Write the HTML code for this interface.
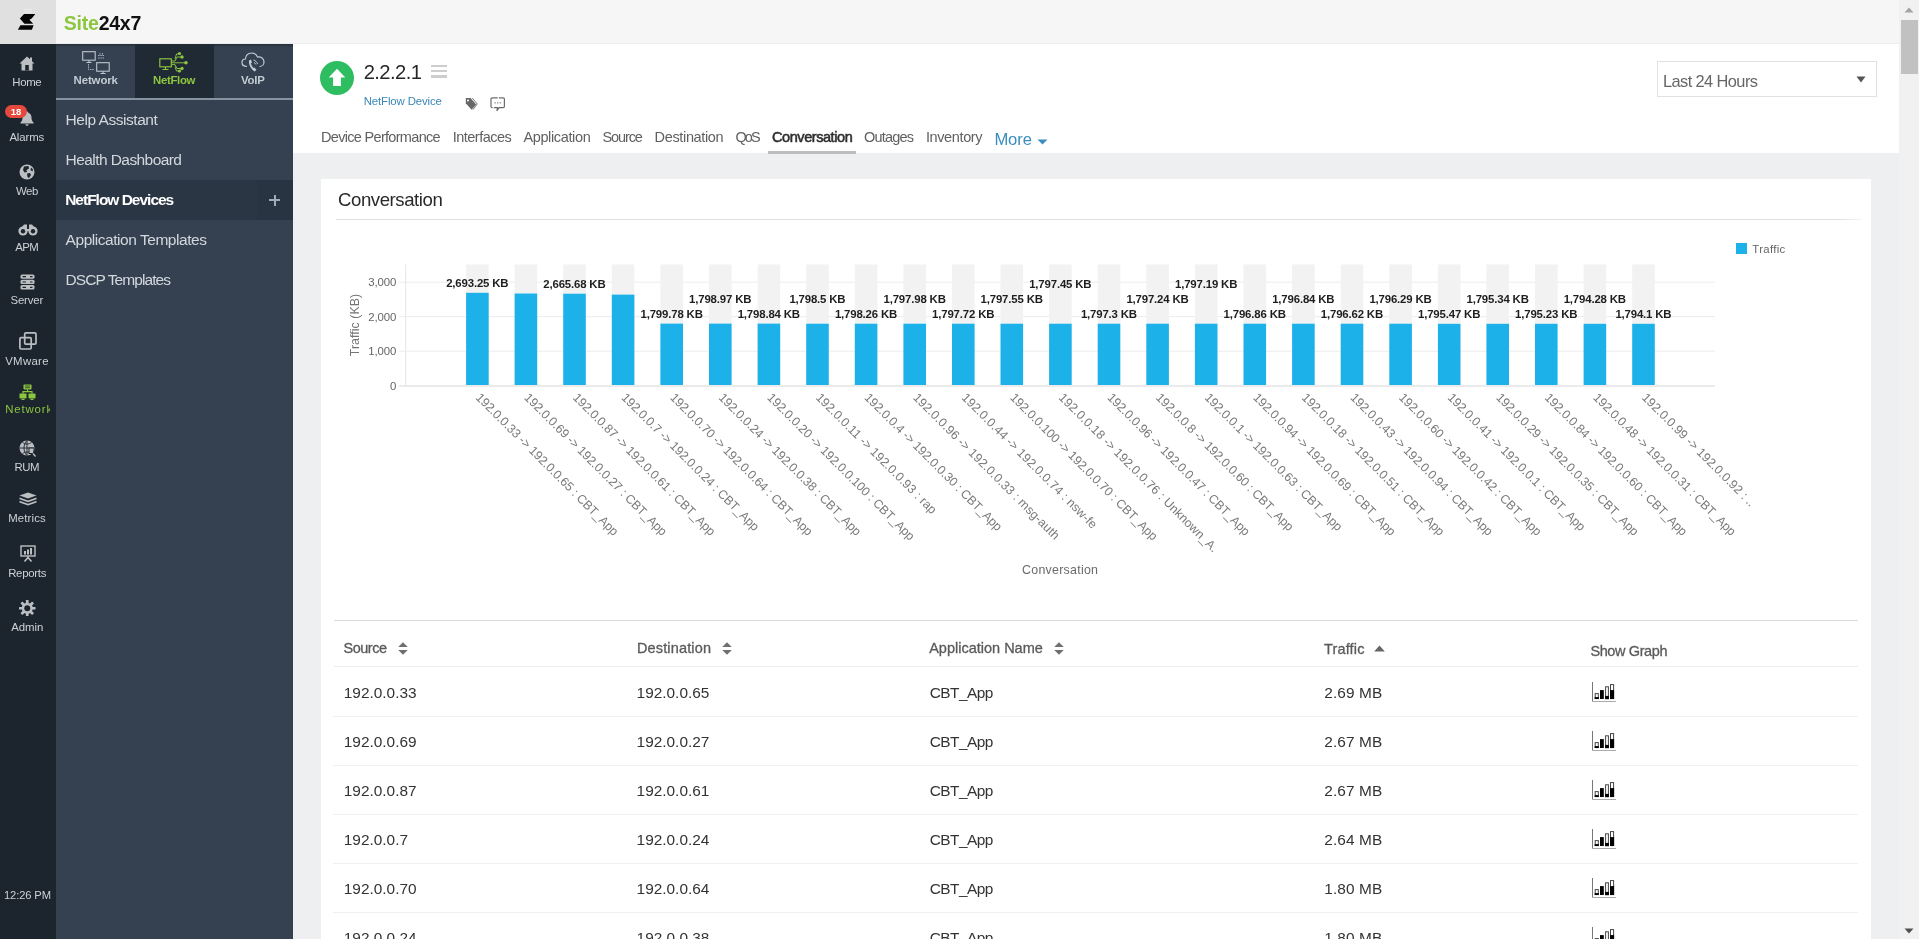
<!DOCTYPE html>
<html lang="en">
<head>
<meta charset="utf-8">
<title>Site24x7 - NetFlow Conversation</title>
<style>
*{box-sizing:border-box;margin:0;padding:0}
html,body{width:1919px;height:939px;overflow:hidden}
body{position:relative;background:#edeff1;font-family:"Liberation Sans",sans-serif;color:#333}
#root{position:absolute;left:0;top:0;width:1919px;height:939px;overflow:hidden;will-change:transform;opacity:0.999}
.abs{position:absolute}
.t{position:absolute;white-space:nowrap}
#topbar{position:absolute;left:0;top:0;width:1899px;height:43.500px;background:#f7f6f6;border-bottom:1px solid #ececec}
#logobox{position:absolute;left:0;top:0;width:56px;height:43.500px;background:#e0e0e0}
#rail{position:absolute;left:0;top:44px;width:56px;height:895px;background:#1c252e}
#side{position:absolute;left:56px;top:44px;width:237px;height:895px;background:#354151}
.stab{position:absolute;top:0;height:54px;width:79px;background:#354151}
.stab.on{background:#1f2a35}
#sshade{position:absolute;left:0;top:0;width:237px;height:3px;background:linear-gradient(#232d38,rgba(35,45,56,0))}
#sline{position:absolute;left:0;top:54px;width:237px;height:2px;background:#8694a2}
#smon{position:absolute;left:0;top:136px;width:237px;height:40px;background:#2b3645}
#hdr{position:absolute;left:293px;top:43.500px;width:1606px;height:109.500px;background:#fff}
#card{position:absolute;left:321px;top:179px;width:1550px;height:780px;background:#fff}
.hl{position:absolute;height:1px;left:334px;width:1524px}
svg.chart{position:absolute;left:321px;top:225px}
#sb{position:absolute;left:1899px;top:0;width:20px;height:939px;background:#f1f1f1}
#sbt{position:absolute;left:2px;top:20px;width:17px;height:54px;background:#c1c1c1}
</style>
</head>
<body>
<div id="root">
<!-- TOP BAR -->
<div id="topbar"></div>
<div id="logobox">
<svg class="abs" style="left:0;top:0" width="56" height="43" viewBox="0 0 56 43"><path d="M24 14H35.300L31.700 18.500L29.400 19.700L33.200 23.700H24.400L19.900 18.500Z" fill="#050505"/><path d="M20.400 25.300H33.600L31.900 29.700H17.900Z" fill="#050505"/><path d="M24 9.500H32M24 11.700H32" stroke="#ececec" stroke-width="1"/></svg>
</div>
<div class="t" style="left:63.800px;top:12px;font-size:19.500px;line-height:22px;font-weight:bold;letter-spacing:-0.23px;color:#111"><span style="color:#8cc63f">Site</span>24x7</div>

<!-- LEFT RAIL -->
<div id="rail"></div>
<svg class="abs" style="left:19.0px;top:56.0px" width="16" height="15" viewBox="0 0 16 15"><path d="M8 0.500L0.500 7.500H2.500V14.500H13.500V7.500H15.500L13 5.200V1.500H11V3.300Z" fill="#bcbfc2"/><rect x="6.200" y="9" width="3.600" height="5.500" fill="#1c252e"/></svg>
<svg class="abs" style="left:19.8px;top:111.0px" width="14" height="15" viewBox="0 0 14 15"><path d="M7 0.500C7.800 0.500 8.300 1 8.300 1.700C10.500 2.300 11.500 4.200 11.500 6.500C11.500 9.500 12.500 10.800 13.500 11.500V12.500H0.500V11.500C1.500 10.800 2.500 9.500 2.500 6.500C2.500 4.200 3.500 2.300 5.700 1.700C5.700 1 6.200 0.500 7 0.500Z" fill="#bcbfc2"/><path d="M5.300 13.300H8.700C8.700 14.200 8 14.800 7 14.800C6 14.800 5.300 14.200 5.300 13.300Z" fill="#bcbfc2"/></svg>
<div class="abs" style="left:5px;top:105px;width:22px;height:13px;border-radius:6.500px;background:#e5493d;color:#fff;font-size:9.500px;font-weight:bold;line-height:13px;text-align:center">18</div>
<svg class="abs" style="left:19.0px;top:164.0px" width="16" height="16" viewBox="0 0 16 16"><circle cx="8" cy="8" r="7.500" fill="#bcbfc2"/><path d="M5 2.500L9.500 2L10 4.500L7.500 6L8 8L5.500 8.500L4 6Z M8 9.500L11 9L12 11L10 14L8.500 13Z M12 3.500L14 5.500L13.500 7.500L11.500 6Z" fill="#1c252e"/></svg>
<svg class="abs" style="left:17.5px;top:224.0px" width="20" height="12" viewBox="0 0 20 12"><circle cx="5" cy="7" r="4.600" fill="#bcbfc2"/><circle cx="15" cy="7" r="4.600" fill="#bcbfc2"/><path d="M4 3L6 0.500H9V5H11V0.500H14L16 3V7H4Z" fill="#bcbfc2"/><circle cx="5" cy="7.200" r="2.200" fill="#1c252e"/><circle cx="15" cy="7.200" r="2.200" fill="#1c252e"/></svg>
<svg class="abs" style="left:20.0px;top:273.5px" width="15" height="16" viewBox="0 0 15 16"><rect x="0.500" y="0.500" width="14" height="4.300" rx="1.500" fill="#bcbfc2"/><rect x="0.500" y="5.800" width="14" height="4.300" rx="1.500" fill="#bcbfc2"/><rect x="0.500" y="11.100" width="14" height="4.300" rx="1.500" fill="#bcbfc2"/><path d="M2.500 2.700H6M2.500 8H6M2.500 13.300H6" stroke="#1c252e" stroke-width="1.200"/><path d="M10 2.700H12.500M10 8H12.500M10 13.300H12.500" stroke="#1c252e" stroke-width="1.200"/></svg>
<svg class="abs" style="left:18.5px;top:332.0px" width="18" height="18" viewBox="0 0 18 18"><rect x="5.700" y="0.900" width="11.300" height="11.300" rx="1.200" fill="none" stroke="#bcbfc2" stroke-width="1.700"/><rect x="0.900" y="5.700" width="11.300" height="11.300" rx="1.200" fill="none" stroke="#bcbfc2" stroke-width="1.700"/></svg>
<svg class="abs" style="left:19.0px;top:384.0px" width="17" height="16" viewBox="0 0 17 16"><rect x="4.500" y="0.500" width="8" height="5" rx="0.800" fill="#8cc63f"/><rect x="0.500" y="9.500" width="7" height="5" rx="0.800" fill="#8cc63f"/><rect x="9.500" y="9.500" width="7" height="5" rx="0.800" fill="#8cc63f"/><path d="M8.500 5.500V7.700M4 9.500V7.700H13V9.500M2.500 15.500H5.500M11.500 15.500H14.500" stroke="#8cc63f" stroke-width="1.200" fill="none"/><path d="M6 2H11M6 3.700H11" stroke="#1c252e" stroke-width="0.700"/></svg>
<svg class="abs" style="left:18.5px;top:440.0px" width="17" height="17" viewBox="0 0 17 17"><circle cx="8" cy="8" r="7.500" fill="#bcbfc2"/><path d="M8 0.500V15.500M0.500 8H15.500M3.500 2.500C6 4.500 10 4.500 12.500 2.500M3.500 13.500C6 11.500 10 11.500 12.500 13.500M8 0.500C4 4.500 4 11.500 8 15.500" stroke="#1c252e" stroke-width="0.900" fill="none"/><rect x="9.500" y="7.500" width="5" height="6.500" fill="#1c252e"/><rect x="10.500" y="8.500" width="3.500" height="4.500" fill="#bcbfc2"/><path d="M14 13.500L16.500 16.500" stroke="#bcbfc2" stroke-width="1.300"/></svg>
<svg class="abs" style="left:18.5px;top:491.5px" width="18" height="15" viewBox="0 0 18 15"><path d="M9 0.500L17.500 3.500L9 6.500L0.500 3.500Z" fill="#bcbfc2"/><path d="M0.500 5.500L9 8.500L17.500 5.500V7.200L9 10.200L0.500 7.200Z M0.500 8.800L9 11.800L17.500 8.800V10.500L9 13.500L0.500 10.500Z" fill="#bcbfc2"/></svg>
<svg class="abs" style="left:19.5px;top:545.0px" width="16" height="17" viewBox="0 0 16 17"><rect x="1" y="1" width="14" height="10" fill="none" stroke="#bcbfc2" stroke-width="1.400"/><rect x="4" y="6" width="2" height="3.500" fill="#bcbfc2"/><rect x="7" y="4.500" width="2" height="5" fill="#bcbfc2"/><rect x="10" y="3" width="2" height="6.500" fill="#bcbfc2"/><path d="M8 11V13M8 12.500L4.500 16.500M8 12.500L11.500 16.500" stroke="#bcbfc2" stroke-width="1.500" fill="none"/></svg>
<svg class="abs" style="left:19.2px;top:599.8px" width="16.5" height="16.5" viewBox="0 0 16.5 16.5"><rect x="6.900" y="0" width="2.700" height="16.500" rx="0.500" transform="rotate(0 8.250 8.250)" fill="#bcbfc2"/><rect x="6.900" y="0" width="2.700" height="16.500" rx="0.500" transform="rotate(45 8.250 8.250)" fill="#bcbfc2"/><rect x="6.900" y="0" width="2.700" height="16.500" rx="0.500" transform="rotate(90 8.250 8.250)" fill="#bcbfc2"/><rect x="6.900" y="0" width="2.700" height="16.500" rx="0.500" transform="rotate(135 8.250 8.250)" fill="#bcbfc2"/><circle cx="8.250" cy="8.250" r="5.600" fill="#bcbfc2"/><circle cx="8.250" cy="8.250" r="3" fill="#1c252e"/></svg>
<div class="t " style="left:12.3px;top:75px;font-size:11.4px;line-height:15px;letter-spacing:-0.34px;color:#cdd1d5;">Home</div>
<div class="t " style="left:9.4px;top:130px;font-size:11.4px;line-height:15px;letter-spacing:-0.13px;color:#cdd1d5;">Alarms</div>
<div class="t " style="left:16.0px;top:184px;font-size:11.4px;line-height:15px;letter-spacing:-0.47px;color:#cdd1d5;">Web</div>
<div class="t " style="left:15.2px;top:240px;font-size:11.4px;line-height:15px;letter-spacing:-0.60px;color:#cdd1d5;">APM</div>
<div class="t " style="left:10.5px;top:293px;font-size:11.4px;line-height:15px;letter-spacing:-0.16px;color:#cdd1d5;">Server</div>
<div class="t " style="left:5.2px;top:354px;font-size:11.4px;line-height:15px;letter-spacing:0.32px;color:#cdd1d5;">VMware</div>
<div class="t " style="left:5.2px;top:402px;font-size:11.4px;line-height:15px;letter-spacing:0.87px;color:#8cc63f;width:44.400px;overflow:hidden;">Network</div>
<div class="t " style="left:14.5px;top:460px;font-size:11.4px;line-height:15px;letter-spacing:-0.53px;color:#cdd1d5;">RUM</div>
<div class="t " style="left:8.2px;top:511px;font-size:11.4px;line-height:15px;letter-spacing:0.13px;color:#cdd1d5;">Metrics</div>
<div class="t " style="left:8.2px;top:566px;font-size:11.4px;line-height:15px;letter-spacing:-0.29px;color:#cdd1d5;">Reports</div>
<div class="t " style="left:11.2px;top:620px;font-size:11.4px;line-height:15px;letter-spacing:-0.05px;color:#cdd1d5;">Admin</div>
<div class="t " style="left:4.0px;top:888px;font-size:11.2px;line-height:15px;letter-spacing:-0.13px;color:#cdd1d5;">12:26 PM</div>

<!-- SIDEBAR -->
<div id="side">
 <div class="stab" style="left:0"></div>
 <div class="stab on" style="left:79px"></div>
 <div class="stab" style="left:158px"></div>
 <div id="sshade"></div>
 <div id="sline"></div>
 <div id="smon"></div>
 <div class="abs" style="left:201px;top:136px;width:36px;height:40px;background:#293443"></div>
</div>
<svg class="abs" style="left:81.5px;top:50.5px" width="28" height="23" viewBox="0 0 28 23"><rect x="0.700" y="0.700" width="12.500" height="8.500" fill="none" stroke="#c3cbd3" stroke-width="1.050"/><path d="M7 9.500V11M4.500 11.500H9.500" stroke="#c3cbd3" stroke-width="1.050"/><rect x="14.700" y="11.700" width="12.500" height="8.500" fill="none" stroke="#c3cbd3" stroke-width="1.050"/><path d="M21 20.500V22M18.500 22.500H23.500" stroke="#c3cbd3" stroke-width="1.050"/><path d="M16 4.500H22M16 7H22M18 2V4.500M20.500 2V4.500" stroke="#c3cbd3" stroke-width="0.800" stroke-dasharray="1.500 0.800"/><path d="M6.500 13V18.500H12" stroke="#c3cbd3" stroke-width="0.800" stroke-dasharray="1.500 0.800" fill="none"/></svg>
<svg class="abs" style="left:159.0px;top:51.0px" width="30" height="22" viewBox="0 0 30 22"><rect x="0.800" y="7.800" width="11.500" height="8" fill="none" stroke="#8cc63f" stroke-width="1.150"/><path d="M6.500 16V18M3.500 18.500H9.500" stroke="#8cc63f" stroke-width="1.150"/><path d="M12.500 11.800H26M12.500 10H16L18 6H22M12.500 13.600H16L18 17.500H22M16 8L17.500 3H20M16 15.600L17.500 20H20" stroke="#8cc63f" stroke-width="0.950" fill="none"/><circle cx="27" cy="11.800" r="1.800" fill="#8cc63f"/><circle cx="23" cy="6" r="1.700" fill="#8cc63f"/><circle cx="23" cy="17.500" r="1.700" fill="#8cc63f"/><circle cx="20.500" cy="2.500" r="1.600" fill="#8cc63f"/><circle cx="20.500" cy="20" r="1.600" fill="#8cc63f"/></svg>
<svg class="abs" style="left:241.0px;top:51.5px" width="24" height="21" viewBox="0 0 24 21"><path d="M6 14.500C2.500 14.500 1 12.500 1 10.500C1 8.500 2.500 7 4.500 7C4.500 3.500 7 1 10.500 1C13.500 1 15.500 2.500 16.500 5C20 4.500 23 6.500 23 10C23 12.500 21 14.500 18.500 14.500" fill="none" stroke="#c3cbd3" stroke-width="1.200"/><path d="M8 8.500C7.500 12.500 10 17 13.500 19.500L15.500 18L13.500 15.500L12.500 16C11 14.500 10 12.500 10 11L11 10.500L10 7.500Z" fill="#c3cbd3"/><path d="M12.500 8C14.500 8.500 16 10 16.500 12M13 10.500C14 11 14.500 11.500 15 12.500" stroke="#c3cbd3" stroke-width="1" fill="none"/></svg>
<div class="abs" style="left:269px;top:199px;width:11px;height:2px;background:#a3abb4"></div><div class="abs" style="left:273.500px;top:194.500px;width:2px;height:11px;background:#a3abb4"></div>
<div class="t " style="left:73.5px;top:73px;font-size:11.4px;line-height:15px;letter-spacing:-0.08px;color:#c3cbd3;font-weight:bold;">Network</div>
<div class="t " style="left:153.0px;top:73px;font-size:11.4px;line-height:15px;letter-spacing:-0.32px;color:#8cc63f;font-weight:bold;">NetFlow</div>
<div class="t " style="left:241.0px;top:73px;font-size:11.4px;line-height:15px;letter-spacing:-0.23px;color:#c3cbd3;font-weight:bold;">VoIP</div>
<div class="t " style="left:65.6px;top:110px;font-size:15.5px;line-height:20px;letter-spacing:-0.46px;color:#d3d8dd;">Help Assistant</div>
<div class="t " style="left:65.6px;top:150px;font-size:15.5px;line-height:20px;letter-spacing:-0.57px;color:#d3d8dd;">Health Dashboard</div>
<div class="t " style="left:65.2px;top:190px;font-size:15.5px;line-height:20px;letter-spacing:-1.01px;color:#fff;font-weight:bold;">NetFlow Devices</div>
<div class="t " style="left:65.6px;top:230px;font-size:15.5px;line-height:20px;letter-spacing:-0.46px;color:#d3d8dd;">Application Templates</div>
<div class="t " style="left:65.6px;top:270px;font-size:15.5px;line-height:20px;letter-spacing:-0.93px;color:#d3d8dd;">DSCP Templates</div>

<!-- HEADER -->
<div id="hdr"></div>
<div class="abs" style="left:320px;top:61px;width:33.500px;height:33.500px;border-radius:17px;background:#2ebd60"></div>
<svg class="abs" style="left:327.700px;top:68.200px" width="18" height="19" viewBox="0 0 18 19"><path d="M9 0.800L17.300 9.600H12.900V18H5.100V9.600H0.700Z" fill="#fff"/></svg>
<div class="abs" style="left:430.500px;top:64.500px;width:16.500px;height:2.400px;background:#cdcdcd"></div><div class="abs" style="left:430.500px;top:69.800px;width:16.500px;height:2.400px;background:#cdcdcd"></div><div class="abs" style="left:430.500px;top:75.200px;width:16.500px;height:2.400px;background:#cdcdcd"></div>
<svg class="abs" style="left:465px;top:97.400px" width="13" height="14" viewBox="0 0 13 14"><path d="M0.800 1H5.600L11.200 7.600L6.600 12.800L0.800 6.200Z" fill="#686868"/><circle cx="3" cy="3.400" r="1" fill="#fff"/><path d="M7.300 1L12.300 7L8 12.600" stroke="#7a7a7a" stroke-width="1" fill="none"/></svg>
<svg class="abs" style="left:490.300px;top:96.700px" width="15.500" height="14.500" viewBox="0 0 15.500 14.500"><path d="M2.200 0.900H13.200Q14.400 0.900 14.400 2.100V9.500Q14.400 10.700 13.200 10.700H9.200L6.800 13.800L7.600 10.700H2.200Q1 10.700 1 9.500V2.100Q1 0.900 2.200 0.900Z" fill="none" stroke="#6c6c6c" stroke-width="1.200" stroke-dasharray="5.500 1.200 30 1.200 40"/><path d="M4.300 5.800H5.700M7 5.800H8.400M9.700 5.800H11.100" stroke="#8d8d8d" stroke-width="1.300"/></svg>
<svg class="abs" style="left:1037px;top:138.500px" width="11" height="6" viewBox="0 0 11 6"><path d="M0.500 0.500H10.500L5.500 5.500Z" fill="#3b8dc0"/></svg>
<div class="abs" style="left:768px;top:151px;width:88px;height:2.700px;background:#bdbdbd"></div>
<div class="abs" style="left:1657px;top:61px;width:220px;height:36px;border:1px solid #e1e1e1;background:#fff"></div>
<svg class="abs" style="left:1856px;top:75.500px" width="10" height="7" viewBox="0 0 10 7"><path d="M0.500 0.500H9.500L5 6.500Z" fill="#555"/></svg>
<div class="t " style="left:363.7px;top:59px;font-size:20.2px;line-height:26px;letter-spacing:-0.58px;color:#262626;">2.2.2.1</div>
<div class="t " style="left:363.7px;top:94px;font-size:11.4px;line-height:15px;letter-spacing:-0.12px;color:#3a86b6;">NetFlow Device</div>
<div class="t " style="left:321.0px;top:128px;font-size:14.5px;line-height:19px;letter-spacing:-0.69px;color:#606060;">Device Performance</div>
<div class="t " style="left:452.8px;top:128px;font-size:14.5px;line-height:19px;letter-spacing:-0.53px;color:#606060;">Interfaces</div>
<div class="t " style="left:523.4px;top:128px;font-size:14.5px;line-height:19px;letter-spacing:-0.36px;color:#606060;">Application</div>
<div class="t " style="left:602.5px;top:128px;font-size:14.5px;line-height:19px;letter-spacing:-1.11px;color:#606060;">Source</div>
<div class="t " style="left:654.6px;top:128px;font-size:14.5px;line-height:19px;letter-spacing:-0.35px;color:#606060;">Destination</div>
<div class="t " style="left:735.4px;top:128px;font-size:14.5px;line-height:19px;letter-spacing:-1.91px;color:#606060;">QoS</div>
<div class="t " style="left:772.0px;top:128px;font-size:14.5px;line-height:19px;letter-spacing:-0.43px;color:#2e2e2e;-webkit-text-stroke:0.550px #2e2e2e;">Conversation</div>
<div class="t " style="left:864.0px;top:128px;font-size:14.5px;line-height:19px;letter-spacing:-0.80px;color:#606060;">Outages</div>
<div class="t " style="left:925.9px;top:128px;font-size:14.5px;line-height:19px;letter-spacing:-0.37px;color:#606060;">Inventory</div>
<div class="t " style="left:994.4px;top:129px;font-size:16.6px;line-height:22px;letter-spacing:-0.11px;color:#3b8dc0;">More</div>
<div class="t " style="left:1663.0px;top:71px;font-size:16.4px;line-height:21px;letter-spacing:-0.59px;color:#666;">Last 24 Hours</div>

<!-- CARD -->
<div id="card"></div>
<div class="t " style="left:338.0px;top:188px;font-size:18.6px;line-height:24px;letter-spacing:-0.44px;color:#2a2a2a;">Conversation</div>
<div class="t " style="left:343.6px;top:639px;font-size:14.5px;line-height:19px;letter-spacing:-0.51px;color:#5a5a5a;-webkit-text-stroke:0.300px #5a5a5a;">Source</div>
<div class="t " style="left:636.9px;top:639px;font-size:14.5px;line-height:19px;letter-spacing:0.16px;color:#5a5a5a;-webkit-text-stroke:0.300px #5a5a5a;">Destination</div>
<div class="t " style="left:929.2px;top:639px;font-size:14.5px;line-height:19px;letter-spacing:0.00px;color:#5a5a5a;-webkit-text-stroke:0.300px #5a5a5a;">Application Name</div>
<div class="t " style="left:1324.0px;top:640px;font-size:14.5px;line-height:19px;letter-spacing:0.15px;color:#5a5a5a;-webkit-text-stroke:0.300px #5a5a5a;">Traffic</div>
<div class="t " style="left:1590.4px;top:642px;font-size:14.5px;line-height:19px;letter-spacing:-0.39px;color:#5a5a5a;-webkit-text-stroke:0.300px #5a5a5a;">Show Graph</div>
<div class="hl" style="top:219px;left:336px;width:1526px;background:linear-gradient(90deg,#e0e0e0 0,#e0e0e0 98.500%,#f4f4f4 100%)"></div>
<svg class="chart" width="1550" height="400" viewBox="321 225 1550 400" font-family="Liberation Sans, sans-serif">
<line x1="399" x2="1715" y1="351.2" y2="351.2" stroke="#ececec" stroke-width="1"/>
<line x1="399" x2="1715" y1="316.7" y2="316.7" stroke="#ececec" stroke-width="1"/>
<line x1="399" x2="1715" y1="282.2" y2="282.2" stroke="#ececec" stroke-width="1"/>
<line x1="405.600" x2="405.600" y1="264.5" y2="386.0" stroke="#e9e9e9" stroke-width="1.200"/>
<rect x="466.1" y="264.5" width="22.6" height="28.3" fill="#f2f2f2"/>
<rect x="466.1" y="292.8" width="22.6" height="92.2" fill="#1db1e9"/>
<rect x="514.6" y="264.5" width="22.6" height="29.0" fill="#f2f2f2"/>
<rect x="514.6" y="293.5" width="22.6" height="91.5" fill="#1db1e9"/>
<rect x="563.2" y="264.5" width="22.6" height="29.2" fill="#f2f2f2"/>
<rect x="563.2" y="293.7" width="22.6" height="91.3" fill="#1db1e9"/>
<rect x="611.8" y="264.5" width="22.6" height="30.1" fill="#f2f2f2"/>
<rect x="611.8" y="294.6" width="22.6" height="90.4" fill="#1db1e9"/>
<rect x="660.4" y="264.5" width="22.6" height="59.1" fill="#f2f2f2"/>
<rect x="660.4" y="323.6" width="22.6" height="61.4" fill="#1db1e9"/>
<rect x="709.0" y="264.5" width="22.6" height="59.1" fill="#f2f2f2"/>
<rect x="709.0" y="323.6" width="22.6" height="61.4" fill="#1db1e9"/>
<rect x="757.6" y="264.5" width="22.6" height="59.1" fill="#f2f2f2"/>
<rect x="757.6" y="323.6" width="22.6" height="61.4" fill="#1db1e9"/>
<rect x="806.2" y="264.5" width="22.6" height="59.2" fill="#f2f2f2"/>
<rect x="806.2" y="323.7" width="22.6" height="61.3" fill="#1db1e9"/>
<rect x="854.8" y="264.5" width="22.6" height="59.2" fill="#f2f2f2"/>
<rect x="854.8" y="323.7" width="22.6" height="61.3" fill="#1db1e9"/>
<rect x="903.4" y="264.5" width="22.6" height="59.2" fill="#f2f2f2"/>
<rect x="903.4" y="323.7" width="22.6" height="61.3" fill="#1db1e9"/>
<rect x="952.0" y="264.5" width="22.6" height="59.2" fill="#f2f2f2"/>
<rect x="952.0" y="323.7" width="22.6" height="61.3" fill="#1db1e9"/>
<rect x="1000.5" y="264.5" width="22.6" height="59.2" fill="#f2f2f2"/>
<rect x="1000.5" y="323.7" width="22.6" height="61.3" fill="#1db1e9"/>
<rect x="1049.1" y="264.5" width="22.6" height="59.2" fill="#f2f2f2"/>
<rect x="1049.1" y="323.7" width="22.6" height="61.3" fill="#1db1e9"/>
<rect x="1097.7" y="264.5" width="22.6" height="59.2" fill="#f2f2f2"/>
<rect x="1097.7" y="323.7" width="22.6" height="61.3" fill="#1db1e9"/>
<rect x="1146.3" y="264.5" width="22.6" height="59.2" fill="#f2f2f2"/>
<rect x="1146.3" y="323.7" width="22.6" height="61.3" fill="#1db1e9"/>
<rect x="1194.9" y="264.5" width="22.6" height="59.2" fill="#f2f2f2"/>
<rect x="1194.9" y="323.7" width="22.6" height="61.3" fill="#1db1e9"/>
<rect x="1243.5" y="264.5" width="22.6" height="59.2" fill="#f2f2f2"/>
<rect x="1243.5" y="323.7" width="22.6" height="61.3" fill="#1db1e9"/>
<rect x="1292.1" y="264.5" width="22.6" height="59.2" fill="#f2f2f2"/>
<rect x="1292.1" y="323.7" width="22.6" height="61.3" fill="#1db1e9"/>
<rect x="1340.7" y="264.5" width="22.6" height="59.2" fill="#f2f2f2"/>
<rect x="1340.7" y="323.7" width="22.6" height="61.3" fill="#1db1e9"/>
<rect x="1389.3" y="264.5" width="22.6" height="59.2" fill="#f2f2f2"/>
<rect x="1389.3" y="323.7" width="22.6" height="61.3" fill="#1db1e9"/>
<rect x="1437.9" y="264.5" width="22.6" height="59.3" fill="#f2f2f2"/>
<rect x="1437.9" y="323.8" width="22.6" height="61.2" fill="#1db1e9"/>
<rect x="1486.4" y="264.5" width="22.6" height="59.3" fill="#f2f2f2"/>
<rect x="1486.4" y="323.8" width="22.6" height="61.2" fill="#1db1e9"/>
<rect x="1535.0" y="264.5" width="22.6" height="59.3" fill="#f2f2f2"/>
<rect x="1535.0" y="323.8" width="22.6" height="61.2" fill="#1db1e9"/>
<rect x="1583.6" y="264.5" width="22.6" height="59.3" fill="#f2f2f2"/>
<rect x="1583.6" y="323.8" width="22.6" height="61.2" fill="#1db1e9"/>
<rect x="1632.2" y="264.5" width="22.6" height="59.3" fill="#f2f2f2"/>
<rect x="1632.2" y="323.8" width="22.6" height="61.2" fill="#1db1e9"/>
<line x1="399" x2="1715" y1="386.05" y2="386.05" stroke="#e4e4e4" stroke-width="1.400"/>
<text x="396.40" y="389.9" text-anchor="end" font-size="11.4" letter-spacing="0.00" fill="#666">0</text>
<text x="396.32" y="355.4" text-anchor="end" font-size="11.4" letter-spacing="-0.08" fill="#666">1,000</text>
<text x="396.32" y="320.9" text-anchor="end" font-size="11.4" letter-spacing="-0.08" fill="#666">2,000</text>
<text x="396.32" y="286.4" text-anchor="end" font-size="11.4" letter-spacing="-0.08" fill="#666">3,000</text>
<text transform="translate(358.600,325.0) rotate(-90)" text-anchor="middle" font-size="12.4" letter-spacing="0.04" fill="#747474">Traffic (KB)</text>
<text x="446.2" y="287.2" font-size="11.4" font-weight="bold" letter-spacing="-0.16" fill="#1e1e1e">2,693.25 KB</text>
<text x="543.3" y="288.2" font-size="11.4" font-weight="bold" letter-spacing="-0.16" fill="#1e1e1e">2,665.68 KB</text>
<text x="640.5" y="317.9" font-size="11.4" font-weight="bold" letter-spacing="-0.16" fill="#1e1e1e">1,799.78 KB</text>
<text x="689.1" y="302.9" font-size="11.4" font-weight="bold" letter-spacing="-0.16" fill="#1e1e1e">1,798.97 KB</text>
<text x="737.7" y="317.9" font-size="11.4" font-weight="bold" letter-spacing="-0.16" fill="#1e1e1e">1,798.84 KB</text>
<text x="789.4" y="302.9" font-size="11.4" font-weight="bold" letter-spacing="-0.16" fill="#1e1e1e">1,798.5 KB</text>
<text x="834.9" y="317.9" font-size="11.4" font-weight="bold" letter-spacing="-0.16" fill="#1e1e1e">1,798.26 KB</text>
<text x="883.5" y="302.9" font-size="11.4" font-weight="bold" letter-spacing="-0.16" fill="#1e1e1e">1,797.98 KB</text>
<text x="932.1" y="317.9" font-size="11.4" font-weight="bold" letter-spacing="-0.16" fill="#1e1e1e">1,797.72 KB</text>
<text x="980.6" y="302.9" font-size="11.4" font-weight="bold" letter-spacing="-0.16" fill="#1e1e1e">1,797.55 KB</text>
<text x="1029.2" y="287.9" font-size="11.4" font-weight="bold" letter-spacing="-0.16" fill="#1e1e1e">1,797.45 KB</text>
<text x="1080.9" y="317.9" font-size="11.4" font-weight="bold" letter-spacing="-0.16" fill="#1e1e1e">1,797.3 KB</text>
<text x="1126.4" y="302.9" font-size="11.4" font-weight="bold" letter-spacing="-0.16" fill="#1e1e1e">1,797.24 KB</text>
<text x="1175.0" y="287.9" font-size="11.4" font-weight="bold" letter-spacing="-0.16" fill="#1e1e1e">1,797.19 KB</text>
<text x="1223.6" y="317.9" font-size="11.4" font-weight="bold" letter-spacing="-0.16" fill="#1e1e1e">1,796.86 KB</text>
<text x="1272.2" y="302.9" font-size="11.4" font-weight="bold" letter-spacing="-0.16" fill="#1e1e1e">1,796.84 KB</text>
<text x="1320.8" y="317.9" font-size="11.4" font-weight="bold" letter-spacing="-0.16" fill="#1e1e1e">1,796.62 KB</text>
<text x="1369.4" y="302.9" font-size="11.4" font-weight="bold" letter-spacing="-0.16" fill="#1e1e1e">1,796.29 KB</text>
<text x="1418.0" y="317.9" font-size="11.4" font-weight="bold" letter-spacing="-0.16" fill="#1e1e1e">1,795.47 KB</text>
<text x="1466.5" y="302.9" font-size="11.4" font-weight="bold" letter-spacing="-0.16" fill="#1e1e1e">1,795.34 KB</text>
<text x="1515.1" y="317.9" font-size="11.4" font-weight="bold" letter-spacing="-0.16" fill="#1e1e1e">1,795.23 KB</text>
<text x="1563.7" y="302.9" font-size="11.4" font-weight="bold" letter-spacing="-0.16" fill="#1e1e1e">1,794.28 KB</text>
<text x="1615.4" y="317.9" font-size="11.4" font-weight="bold" letter-spacing="-0.16" fill="#1e1e1e">1,794.1 KB</text>
<text transform="translate(475.1,398.2) rotate(45)" font-size="12.4" letter-spacing="-0.12" fill="#7a7a7a">192.0.0.33 -&gt; 192.0.0.65 : CBT_App</text>
<text transform="translate(523.6,398.2) rotate(45)" font-size="12.4" letter-spacing="-0.12" fill="#7a7a7a">192.0.0.69 -&gt; 192.0.0.27 : CBT_App</text>
<text transform="translate(572.2,398.2) rotate(45)" font-size="12.4" letter-spacing="-0.12" fill="#7a7a7a">192.0.0.87 -&gt; 192.0.0.61 : CBT_App</text>
<text transform="translate(620.8,398.2) rotate(45)" font-size="12.4" letter-spacing="-0.12" fill="#7a7a7a">192.0.0.7 -&gt; 192.0.0.24 : CBT_App</text>
<text transform="translate(669.4,398.2) rotate(45)" font-size="12.4" letter-spacing="-0.12" fill="#7a7a7a">192.0.0.70 -&gt; 192.0.0.64 : CBT_App</text>
<text transform="translate(718.0,398.2) rotate(45)" font-size="12.4" letter-spacing="-0.12" fill="#7a7a7a">192.0.0.24 -&gt; 192.0.0.38 : CBT_App</text>
<text transform="translate(766.6,398.2) rotate(45)" font-size="12.4" letter-spacing="-0.12" fill="#7a7a7a">192.0.0.20 -&gt; 192.0.0.100 : CBT_App</text>
<text transform="translate(815.2,398.2) rotate(45)" font-size="12.4" letter-spacing="0.07" fill="#7a7a7a">192.0.0.11 -&gt; 192.0.0.93 : rap</text>
<text transform="translate(863.8,398.2) rotate(45)" font-size="12.4" letter-spacing="-0.12" fill="#7a7a7a">192.0.0.4 -&gt; 192.0.0.30 : CBT_App</text>
<text transform="translate(912.4,398.2) rotate(45)" font-size="12.4" letter-spacing="0.11" fill="#7a7a7a">192.0.0.96 -&gt; 192.0.0.33 : msg-auth</text>
<text transform="translate(961.0,398.2) rotate(45)" font-size="12.4" letter-spacing="0.10" fill="#7a7a7a">192.0.0.44 -&gt; 192.0.0.74 : nsw-fe</text>
<text transform="translate(1009.5,398.2) rotate(45)" font-size="12.4" letter-spacing="-0.12" fill="#7a7a7a">192.0.0.100 -&gt; 192.0.0.70 : CBT_App</text>
<text transform="translate(1058.1,398.2) rotate(45)" font-size="12.4" letter-spacing="0.08" fill="#7a7a7a">192.0.0.18 -&gt; 192.0.0.76 : Unknown_A.</text>
<text transform="translate(1106.7,398.2) rotate(45)" font-size="12.4" letter-spacing="-0.12" fill="#7a7a7a">192.0.0.96 -&gt; 192.0.0.47 : CBT_App</text>
<text transform="translate(1155.3,398.2) rotate(45)" font-size="12.4" letter-spacing="-0.12" fill="#7a7a7a">192.0.0.8 -&gt; 192.0.0.60 : CBT_App</text>
<text transform="translate(1203.9,398.2) rotate(45)" font-size="12.4" letter-spacing="-0.12" fill="#7a7a7a">192.0.0.1 -&gt; 192.0.0.63 : CBT_App</text>
<text transform="translate(1252.5,398.2) rotate(45)" font-size="12.4" letter-spacing="-0.12" fill="#7a7a7a">192.0.0.94 -&gt; 192.0.0.69 : CBT_App</text>
<text transform="translate(1301.1,398.2) rotate(45)" font-size="12.4" letter-spacing="-0.12" fill="#7a7a7a">192.0.0.18 -&gt; 192.0.0.51 : CBT_App</text>
<text transform="translate(1349.7,398.2) rotate(45)" font-size="12.4" letter-spacing="-0.12" fill="#7a7a7a">192.0.0.43 -&gt; 192.0.0.94 : CBT_App</text>
<text transform="translate(1398.3,398.2) rotate(45)" font-size="12.4" letter-spacing="-0.12" fill="#7a7a7a">192.0.0.60 -&gt; 192.0.0.42 : CBT_App</text>
<text transform="translate(1446.9,398.2) rotate(45)" font-size="12.4" letter-spacing="-0.12" fill="#7a7a7a">192.0.0.41 -&gt; 192.0.0.1 : CBT_App</text>
<text transform="translate(1495.4,398.2) rotate(45)" font-size="12.4" letter-spacing="-0.12" fill="#7a7a7a">192.0.0.29 -&gt; 192.0.0.35 : CBT_App</text>
<text transform="translate(1544.0,398.2) rotate(45)" font-size="12.4" letter-spacing="-0.12" fill="#7a7a7a">192.0.0.84 -&gt; 192.0.0.60 : CBT_App</text>
<text transform="translate(1592.6,398.2) rotate(45)" font-size="12.4" letter-spacing="-0.12" fill="#7a7a7a">192.0.0.48 -&gt; 192.0.0.31 : CBT_App</text>
<text transform="translate(1641.2,398.2) rotate(45)" font-size="12.4" letter-spacing="0.06" fill="#7a7a7a">192.0.0.99 -&gt; 192.0.0.92 : ..</text>
<text x="1022.0" y="573.6" font-size="12.4" letter-spacing="0.27" fill="#6a6a6a">Conversation</text>
<rect x="1736" y="243" width="11" height="11" fill="#1db1e9"/>
<text x="1752.300" y="252.5" font-size="11.4" letter-spacing="0.33" fill="#666">Traffic</text>
</svg>
<div class="hl" style="top:620px;background:#dadada"></div>
<svg class="abs" style="left:398.2px;top:642.4px" width="10" height="13" viewBox="0 0 10 13"><path d="M5 0.300L9.800 5H0.200ZM5 12.700L9.800 8H0.200Z" fill="#707070"/></svg><svg class="abs" style="left:722.0px;top:642.4px" width="10" height="13" viewBox="0 0 10 13"><path d="M5 0.300L9.800 5H0.200ZM5 12.700L9.800 8H0.200Z" fill="#707070"/></svg><svg class="abs" style="left:1053.8px;top:642.4px" width="10" height="13" viewBox="0 0 10 13"><path d="M5 0.300L9.800 5H0.200ZM5 12.700L9.800 8H0.200Z" fill="#707070"/></svg><svg class="abs" style="left:1373.500px;top:645.300px" width="11" height="7" viewBox="0 0 11 7"><path d="M5.500 0.500L10.800 6.500H0.200Z" fill="#666"/></svg>
<div class="hl" style="top:666px;height:1px;background:#ededed"></div>
<div class="t " style="left:343.8px;top:683px;font-size:15.4px;line-height:20px;letter-spacing:0.00px;color:#333;">192.0.0.33</div>
<div class="t " style="left:636.6px;top:683px;font-size:15.4px;line-height:20px;letter-spacing:0.00px;color:#333;">192.0.0.65</div>
<div class="t " style="left:929.8px;top:683px;font-size:15.4px;line-height:20px;letter-spacing:-0.54px;color:#333;">CBT_App</div>
<div class="t " style="left:1324.2px;top:683px;font-size:15.4px;line-height:20px;letter-spacing:0.14px;color:#333;">2.69 MB</div>
<svg class="abs" style="left:1592px;top:682.0px" width="24" height="20" viewBox="0 0 24 20"><path d="M0.500 0V19.500" stroke="#777" stroke-width="1"/><path d="M0.500 19.500H24" stroke="#aaa" stroke-width="1"/><rect x="3.200" y="11.600" width="3.100" height="5" fill="#fff" stroke="#444" stroke-width="1"/><rect x="2.700" y="15.100" width="4.100" height="1.900" fill="#000"/><rect x="8" y="8.100" width="3.800" height="8.900" fill="#000"/><rect x="13.600" y="4.800" width="2.800" height="12" fill="#fff" stroke="#444" stroke-width="1"/><rect x="13.100" y="13.900" width="3.800" height="3.100" fill="#000"/><rect x="18.500" y="2.600" width="3.100" height="14" fill="#fff" stroke="#444" stroke-width="1"/><rect x="18" y="8.100" width="4.100" height="8.900" fill="#000"/></svg>
<div class="hl" style="top:716px;left:333px;width:1525px;background:#f0f0f0"></div>
<div class="t " style="left:343.8px;top:732px;font-size:15.4px;line-height:20px;letter-spacing:0.00px;color:#333;">192.0.0.69</div>
<div class="t " style="left:636.6px;top:732px;font-size:15.4px;line-height:20px;letter-spacing:0.00px;color:#333;">192.0.0.27</div>
<div class="t " style="left:929.8px;top:732px;font-size:15.4px;line-height:20px;letter-spacing:-0.54px;color:#333;">CBT_App</div>
<div class="t " style="left:1324.2px;top:732px;font-size:15.4px;line-height:20px;letter-spacing:0.14px;color:#333;">2.67 MB</div>
<svg class="abs" style="left:1592px;top:731.0px" width="24" height="20" viewBox="0 0 24 20"><path d="M0.500 0V19.500" stroke="#777" stroke-width="1"/><path d="M0.500 19.500H24" stroke="#aaa" stroke-width="1"/><rect x="3.200" y="11.600" width="3.100" height="5" fill="#fff" stroke="#444" stroke-width="1"/><rect x="2.700" y="15.100" width="4.100" height="1.900" fill="#000"/><rect x="8" y="8.100" width="3.800" height="8.900" fill="#000"/><rect x="13.600" y="4.800" width="2.800" height="12" fill="#fff" stroke="#444" stroke-width="1"/><rect x="13.100" y="13.900" width="3.800" height="3.100" fill="#000"/><rect x="18.500" y="2.600" width="3.100" height="14" fill="#fff" stroke="#444" stroke-width="1"/><rect x="18" y="8.100" width="4.100" height="8.900" fill="#000"/></svg>
<div class="hl" style="top:765px;left:333px;width:1525px;background:#f0f0f0"></div>
<div class="t " style="left:343.8px;top:781px;font-size:15.4px;line-height:20px;letter-spacing:0.00px;color:#333;">192.0.0.87</div>
<div class="t " style="left:636.6px;top:781px;font-size:15.4px;line-height:20px;letter-spacing:0.00px;color:#333;">192.0.0.61</div>
<div class="t " style="left:929.8px;top:781px;font-size:15.4px;line-height:20px;letter-spacing:-0.54px;color:#333;">CBT_App</div>
<div class="t " style="left:1324.2px;top:781px;font-size:15.4px;line-height:20px;letter-spacing:0.14px;color:#333;">2.67 MB</div>
<svg class="abs" style="left:1592px;top:780.0px" width="24" height="20" viewBox="0 0 24 20"><path d="M0.500 0V19.500" stroke="#777" stroke-width="1"/><path d="M0.500 19.500H24" stroke="#aaa" stroke-width="1"/><rect x="3.200" y="11.600" width="3.100" height="5" fill="#fff" stroke="#444" stroke-width="1"/><rect x="2.700" y="15.100" width="4.100" height="1.900" fill="#000"/><rect x="8" y="8.100" width="3.800" height="8.900" fill="#000"/><rect x="13.600" y="4.800" width="2.800" height="12" fill="#fff" stroke="#444" stroke-width="1"/><rect x="13.100" y="13.900" width="3.800" height="3.100" fill="#000"/><rect x="18.500" y="2.600" width="3.100" height="14" fill="#fff" stroke="#444" stroke-width="1"/><rect x="18" y="8.100" width="4.100" height="8.900" fill="#000"/></svg>
<div class="hl" style="top:814px;left:333px;width:1525px;background:#f0f0f0"></div>
<div class="t " style="left:343.8px;top:830px;font-size:15.4px;line-height:20px;letter-spacing:0.00px;color:#333;">192.0.0.7</div>
<div class="t " style="left:636.6px;top:830px;font-size:15.4px;line-height:20px;letter-spacing:0.00px;color:#333;">192.0.0.24</div>
<div class="t " style="left:929.8px;top:830px;font-size:15.4px;line-height:20px;letter-spacing:-0.54px;color:#333;">CBT_App</div>
<div class="t " style="left:1324.2px;top:830px;font-size:15.4px;line-height:20px;letter-spacing:0.14px;color:#333;">2.64 MB</div>
<svg class="abs" style="left:1592px;top:829.0px" width="24" height="20" viewBox="0 0 24 20"><path d="M0.500 0V19.500" stroke="#777" stroke-width="1"/><path d="M0.500 19.500H24" stroke="#aaa" stroke-width="1"/><rect x="3.200" y="11.600" width="3.100" height="5" fill="#fff" stroke="#444" stroke-width="1"/><rect x="2.700" y="15.100" width="4.100" height="1.900" fill="#000"/><rect x="8" y="8.100" width="3.800" height="8.900" fill="#000"/><rect x="13.600" y="4.800" width="2.800" height="12" fill="#fff" stroke="#444" stroke-width="1"/><rect x="13.100" y="13.900" width="3.800" height="3.100" fill="#000"/><rect x="18.500" y="2.600" width="3.100" height="14" fill="#fff" stroke="#444" stroke-width="1"/><rect x="18" y="8.100" width="4.100" height="8.900" fill="#000"/></svg>
<div class="hl" style="top:863px;left:333px;width:1525px;background:#f0f0f0"></div>
<div class="t " style="left:343.8px;top:879px;font-size:15.4px;line-height:20px;letter-spacing:0.00px;color:#333;">192.0.0.70</div>
<div class="t " style="left:636.6px;top:879px;font-size:15.4px;line-height:20px;letter-spacing:0.00px;color:#333;">192.0.0.64</div>
<div class="t " style="left:929.8px;top:879px;font-size:15.4px;line-height:20px;letter-spacing:-0.54px;color:#333;">CBT_App</div>
<div class="t " style="left:1324.2px;top:879px;font-size:15.4px;line-height:20px;letter-spacing:0.14px;color:#333;">1.80 MB</div>
<svg class="abs" style="left:1592px;top:878.0px" width="24" height="20" viewBox="0 0 24 20"><path d="M0.500 0V19.500" stroke="#777" stroke-width="1"/><path d="M0.500 19.500H24" stroke="#aaa" stroke-width="1"/><rect x="3.200" y="11.600" width="3.100" height="5" fill="#fff" stroke="#444" stroke-width="1"/><rect x="2.700" y="15.100" width="4.100" height="1.900" fill="#000"/><rect x="8" y="8.100" width="3.800" height="8.900" fill="#000"/><rect x="13.600" y="4.800" width="2.800" height="12" fill="#fff" stroke="#444" stroke-width="1"/><rect x="13.100" y="13.900" width="3.800" height="3.100" fill="#000"/><rect x="18.500" y="2.600" width="3.100" height="14" fill="#fff" stroke="#444" stroke-width="1"/><rect x="18" y="8.100" width="4.100" height="8.900" fill="#000"/></svg>
<div class="hl" style="top:912px;left:333px;width:1525px;background:#f0f0f0"></div>
<div class="t " style="left:343.8px;top:928px;font-size:15.4px;line-height:20px;letter-spacing:0.00px;color:#333;">192.0.0.24</div>
<div class="t " style="left:636.6px;top:928px;font-size:15.4px;line-height:20px;letter-spacing:0.00px;color:#333;">192.0.0.38</div>
<div class="t " style="left:929.8px;top:928px;font-size:15.4px;line-height:20px;letter-spacing:-0.54px;color:#333;">CBT_App</div>
<div class="t " style="left:1324.2px;top:928px;font-size:15.4px;line-height:20px;letter-spacing:0.14px;color:#333;">1.80 MB</div>
<svg class="abs" style="left:1592px;top:927.0px" width="24" height="20" viewBox="0 0 24 20"><path d="M0.500 0V19.500" stroke="#777" stroke-width="1"/><path d="M0.500 19.500H24" stroke="#aaa" stroke-width="1"/><rect x="3.200" y="11.600" width="3.100" height="5" fill="#fff" stroke="#444" stroke-width="1"/><rect x="2.700" y="15.100" width="4.100" height="1.900" fill="#000"/><rect x="8" y="8.100" width="3.800" height="8.900" fill="#000"/><rect x="13.600" y="4.800" width="2.800" height="12" fill="#fff" stroke="#444" stroke-width="1"/><rect x="13.100" y="13.900" width="3.800" height="3.100" fill="#000"/><rect x="18.500" y="2.600" width="3.100" height="14" fill="#fff" stroke="#444" stroke-width="1"/><rect x="18" y="8.100" width="4.100" height="8.900" fill="#000"/></svg>
<div class="hl" style="top:961px;left:333px;width:1525px;background:#f0f0f0"></div>

<!-- SCROLLBAR -->
<div id="sb"><div id="sbt"></div>
<svg class="abs" style="left:5px;top:7px" width="10" height="6" viewBox="0 0 10 6"><path d="M5 0.500L9.500 5.500H0.500Z" fill="#a3a3a3"/></svg>
<svg class="abs" style="left:5px;top:927.500px" width="10" height="6" viewBox="0 0 10 6"><path d="M5 5.500L9.500 0.500H0.500Z" fill="#505050"/></svg>
</div>
</div>
</body>
</html>
